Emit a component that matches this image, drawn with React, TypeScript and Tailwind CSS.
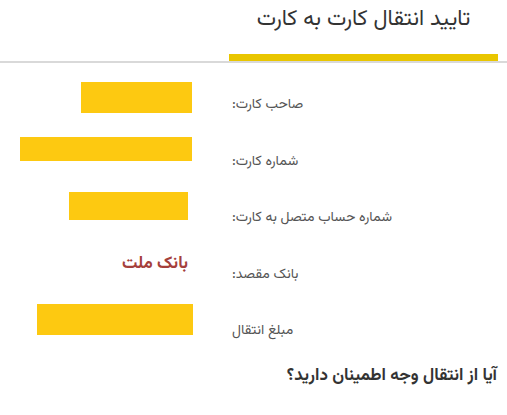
const FONT = "font-['Vazirmatn','Noto_Sans_Arabic','Noto_Naskh_Arabic','DejaVu_Sans',sans-serif]"

type Row = {
  label: string
  value: React.ReactNode
}

function Redacted({ width, height, top }: { width: number; height: number; top: number }) {
  // masked value block; width/height come from the data rows
  return <div className="bg-[#fdc911]" style={{ width, height, marginTop: top }} />
}

const rows: Row[] = [
  { label: 'صاحب کارت:', value: <Redacted width={111} height={31} top={5} /> },
  { label: 'شماره کارت:', value: <Redacted width={172} height={24} top={3} /> },
  {
    label: 'شماره حساب متصل به کارت:',
    value: (
      <div className="mr-[4px]">
        <Redacted width={119} height={28} top={2} />
      </div>
    ),
  },
  {
    label: 'بانک مقصد:',
    value: (
      <div dir="rtl" className="mr-[4px] mt-[5px] text-[17px] font-bold leading-[24px] text-[#a5403b]">
        بانک ملت
      </div>
    ),
  },
  {
    label: 'مبلغ انتقال',
    value: (
      <div className="-mr-[1px]">
        <Redacted width={156} height={31} top={1} />
      </div>
    ),
  },
]

export default function App() {
  return (
    <div className={`w-[507px] h-[415px] bg-white text-[#444] ${FONT}`}>
      <div className="flex justify-end pr-[9px]">
        <div className="w-[269px] border-b-[7px] border-[#e9c600] pt-[5px] pb-[19px] text-center">
          <h1 dir="rtl" className="text-[22px] leading-[30px] font-normal text-[#333]">
            تایید انتقال کارت به کارت
          </h1>
        </div>
      </div>
      <div className="h-[2px] bg-[#d9d9d9]" />

      <div className="mt-[14px] flex flex-col">
        {rows.map((row) => (
          <div key={row.label} className="flex h-[56.5px] items-start">
            <div className="flex w-[192px] justify-end">{row.value}</div>
            <div className="ml-[40px] pt-[16px]">
              <span dir="rtl" className="inline-block text-[14px] leading-[24px] text-[#555]">
                {row.label}
              </span>
            </div>
          </div>
        ))}
      </div>

      <div className="flex justify-end pr-[10px] pt-[3px]">
        <p dir="rtl" className="text-[17px] font-bold leading-[26px] text-[#333]">
          آیا از انتقال وجه اطمینان دارید؟
        </p>
      </div>
    </div>
  )
}
